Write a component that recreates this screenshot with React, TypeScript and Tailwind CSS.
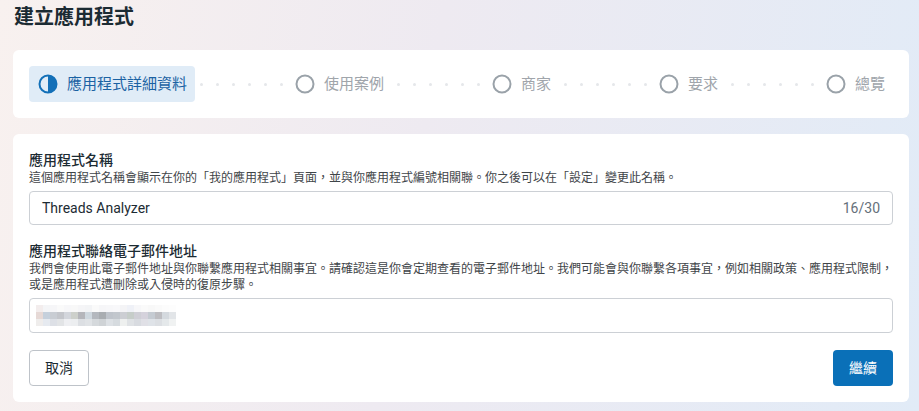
import React from "react";

const row1 = ['#f3eded','#f4f5f7','#f6f6f8','#fafafa','#f7f7f9','#f8f8f8','#f5f5f7','#f3f4f6','#fafafa','#f6f6f8','#f7f7f9','#f8f8fa','#f4f4f6','#eff1f7','#f7f7f9','#fafafa','#f8f8f8','#fafafa','#fcfcfc','#fdfdfd'];
const row2 = ['#e6d9d6','#c5d0dc','#c9cdd3','#c4c6cb','#d3d6dc','#cdd0cb','#b5b6bb','#cfd8df','#b4b8be','#a9adb1','#bfc4cb','#c2c7cd','#ccced3','#c6cdc9','#cfcfd6','#d5d2dc','#c5cbd2','#bdbdc1','#d4d9de','#e2e5e8'];
const row3 = ['#efedec','#e6eaf0','#dde0e6','#e2e4e6','#eeeff2','#eceef0','#dcdfe3','#e0e3e6','#d5d9dc','#cfd3d6','#dde1e5','#d6dbdf','#eef0ef','#dfe2e5','#d8dbe0','#e0e0e6','#dfe3e8','#dcdfe3','#e4e8ea','#f0f2f2'];

function Dots() {
  return (
    <div className="flex-1 flex justify-center items-center gap-[13px]">
      {[0, 1, 2, 3, 4, 5].map((i) => (
        <div key={i} className="w-[3px] h-[3px] rounded-full bg-[#e5e7ea]" />
      ))}
    </div>
  );
}

function EmptyCircle() {
  return (
    <svg width="20" height="20" viewBox="0 0 20 20" className="shrink-0">
      <circle cx="10" cy="10" r="8.5" fill="none" stroke="#9aa2a9" strokeWidth="2" />
    </svg>
  );
}

function HalfCircle() {
  return (
    <svg width="20" height="20" viewBox="0 0 20 20" className="shrink-0">
      <circle cx="10" cy="10" r="8.5" fill="none" stroke="#1370b8" strokeWidth="2" />
      <path d="M10 1.5 A8.5 8.5 0 0 1 10 18.5 Z" fill="#1370b8" />
    </svg>
  );
}

function Step({ label }: { label: string }) {
  return (
    <div className="flex items-center gap-[9px] h-9 px-2 shrink-0">
      <EmptyCircle />
      <span className="text-[15px] text-[#a0a5ab]">{label}</span>
    </div>
  );
}

export default function App() {
  return (
    <div
      lang="zh-TW"
      className="w-[919px] h-[411px] overflow-hidden pl-[13px] pr-[10px] pt-[3px] bg-[linear-gradient(100deg,#f8f1ef_0%,#eeeaf1_45%,#e1ebf7_100%)] text-[#1c2b33]"
      style={{ fontFamily: 'Roboto, "Noto Sans CJK TC", "Noto Sans", sans-serif' }}
    >
      <h1 className="text-[20px] leading-7 font-bold pl-px mb-[19px]">建立應用程式</h1>

      <div className="bg-white rounded-md px-4 py-4 flex items-center">
        <div className="flex items-center gap-[9px] h-9 pl-[9px] pr-2 rounded bg-[#e0ecf7] shrink-0">
          <HalfCircle />
          <span className="text-[15px] text-[#1b62a3]">應用程式詳細資料</span>
        </div>
        <Dots />
        <Step label="使用案例" />
        <Dots />
        <Step label="商家" />
        <Dots />
        <Step label="要求" />
        <Dots />
        <Step label="總覽" />
      </div>

      <div className="mt-4 bg-white rounded-md px-4 pt-4 pb-4">
        <div className="text-sm leading-5 font-medium">應用程式名稱</div>
        <div className="text-xs leading-4 text-[#3f4549]">
          這個應用程式名稱會顯示在你的「我的應用程式」頁面，並與你應用程式編號相關聯。你之後可以在「設定」變更此名稱。
        </div>
        <div className="mt-[5px] h-[34px] border border-[#ccd0d5] rounded flex items-center justify-between pl-3 pr-3">
          <span className="text-sm text-[#1c2b33]">Threads Analyzer</span>
          <span className="text-sm text-[#65707a]">16/30</span>
        </div>

        <div className="mt-4 text-sm leading-5 font-medium">應用程式聯絡電子郵件地址</div>
        <div className="text-xs leading-4 text-[#3f4549]">
          <div className="whitespace-nowrap">
            我們會使用此電子郵件地址與你聯繫應用程式相關事宜。請確認這是你會定期查看的電子郵件地址。我們可能會與你聯繫各項事宜，例如相關政策、應用程式限制，
          </div>
          <div>或是應用程式遭刪除或入侵時的復原步驟。</div>
        </div>
        <div className="mt-[5px] h-[35px] border border-[#ccd0d5] rounded flex items-center pl-[6px]">
          <div className="flex flex-col">
            {[row1, row2, row3].map((row, r) => (
              <div key={r} className="flex">
                {row.map((c, i) => (
                  <div key={i} className="w-[7px] h-[7px]" style={{ backgroundColor: c }} />
                ))}
              </div>
            ))}
          </div>
        </div>

        <div className="mt-[17px] flex justify-between">
          <button className="h-9 w-[60px] border border-[#bec3c9] rounded text-sm font-normal text-[#1c2b33] bg-white">取消</button>
          <button className="h-9 w-[60px] rounded text-sm font-normal text-white bg-[#0a70b8]">繼續</button>
        </div>
      </div>
    </div>
  );
}
